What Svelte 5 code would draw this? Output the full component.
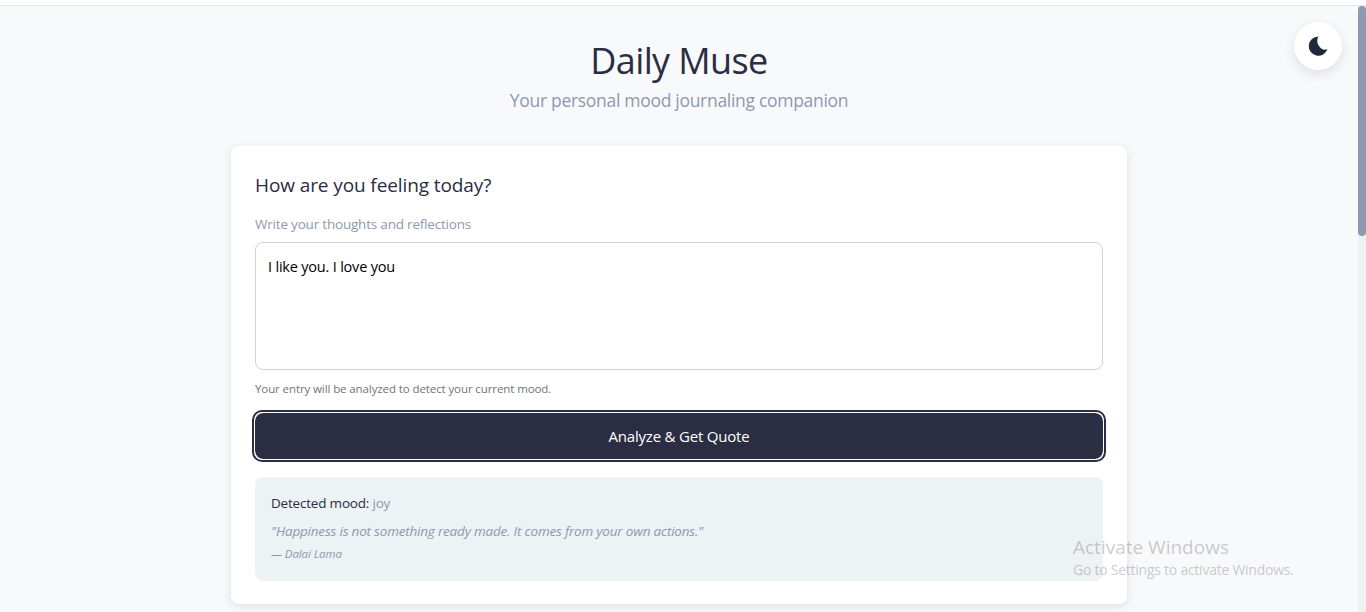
<script>
  let entry = $state("I like you. I love you");
</script>

<div class="topline"></div>
<div class="viewport">
  <main class="page">
    <header>
      <h1>Daily Muse</h1>
      <p class="tagline">Your personal mood journaling companion</p>
    </header>

    <section class="card">
      <h2>How are you feeling today?</h2>
      <label for="entry">Write your thoughts and reflections</label>
      <textarea id="entry" bind:value={entry}></textarea>
      <p class="hint">Your entry will be analyzed to detect your current mood.</p>
      <button class="analyze">Analyze &amp; Get Quote</button>

      <div class="result">
        <p class="mood">Detected mood: <span>joy</span></p>
        <p class="quote">"Happiness is not something ready made. It comes from your own actions."</p>
        <p class="author">— Dalai Lama</p>
      </div>
    </section>
  </main>

  <div class="scrollbar"><div class="thumb"></div></div>
</div>

<button class="theme" aria-label="Toggle dark mode">
  <svg viewBox="0 0 24 24" width="24" height="24">
    <path d="M12.3 2.5a9.6 9.6 0 1 0 9.2 12.6c-.9.4-2 .6-3.1.6a9.2 9.2 0 0 1-6.1-13.2z" fill="#1e293b" />
  </svg>
</button>

<div class="activate">
  <div class="big">Activate Windows</div>
  <div class="small">Go to Settings to activate Windows.</div>
</div>

<style>
  :global(body) {
    margin: 0;
    overflow: hidden;
    background: #f8f9fb;
    font-family: "Open Sans", "Noto Sans", sans-serif;
  }

  .topline {
    height: 5px;
    background: #fff;
    border-bottom: 1px solid #e2e4e8;
  }

  .viewport {
    display: flex;
    height: 606px;
    overflow: hidden;
  }

  .page {
    flex: 1;
    min-width: 0;
    display: flex;
    flex-direction: column;
    align-items: center;
  }

  header {
    text-align: center;
    height: 140px;
  }

  h1 {
    margin: 0;
    padding-top: 31px;
    font-size: 36px;
    line-height: 48px;
    font-weight: 400;
    letter-spacing: -0.6px;
    color: #2b2d42;
  }

  .tagline {
    margin: 0;
    padding-top: 3px;
    font-size: 17.5px;
    line-height: 24px;
    letter-spacing: -0.3px;
    color: #8d99ae;
  }

  .card {
    width: 896px;
    box-sizing: border-box;
    padding: 24px;
    height: 458px;
    background: #fff;
    border-radius: 8px;
    box-shadow: 0 2px 8px rgba(43, 45, 66, 0.12);
  }

  h2 {
    margin: 0;
    font-size: 19px;
    line-height: 30px;
    font-weight: 400;
    letter-spacing: -0.1px;
    color: #2b2d42;
  }

  label {
    display: block;
    margin-top: 14px;
    font-size: 13.5px;
    line-height: 20px;
    letter-spacing: -0.2px;
    color: #8d99ae;
  }

  textarea {
    display: block;
    box-sizing: border-box;
    width: 100%;
    height: 128px;
    margin-top: 8px;
    padding: 12px;
    border: 1px solid #ced2d9;
    border-radius: 8px;
    background: #fff;
    font: inherit;
    font-size: 14.5px;
    line-height: 24px;
    letter-spacing: -0.2px;
    color: #000;
    resize: none;
    outline: none;
  }

  .hint {
    margin: 10px 0 0;
    font-size: 11.5px;
    line-height: 18px;
    letter-spacing: -0.1px;
    color: #6c757d;
  }

  .analyze {
    display: block;
    width: 100%;
    height: 46px;
    margin-top: 15px;
    border: 0;
    border-radius: 8px;
    background: #2b2d42;
    color: #fff;
    font: inherit;
    font-size: 15px;
    letter-spacing: -0.2px;
    box-shadow: inset 0 0 0 0 transparent;
    outline: 2px solid #fff;
    outline-offset: 0;
    position: relative;
  }

  .analyze::after {
    content: "";
    position: absolute;
    inset: -3px;
    border: 2px solid #2b2d42;
    border-radius: 10px;
  }

  .result {
    margin-top: 18px;
    padding: 16px;
    height: 104px;
    box-sizing: border-box;
    background: #edf2f4;
    border-radius: 8px;
  }

  .result p {
    margin: 0;
  }

  .mood {
    font-size: 13.5px;
    line-height: 20px;
    letter-spacing: -0.2px;
    color: #2b2d42;
  }

  .mood span {
    color: #8d99ae;
  }

  .quote {
    padding-top: 8px;
    font-size: 13.5px;
    line-height: 20px;
    font-style: italic;
    letter-spacing: -0.2px;
    color: #8d99ae;
  }

  .author {
    padding-top: 4px;
    font-size: 11.5px;
    line-height: 18px;
    font-style: italic;
    letter-spacing: -0.1px;
    color: #8d99ae;
  }

  .scrollbar {
    width: 8px;
    background: #edf2f4;
  }

  .thumb {
    height: 230px;
    background: #8d99ae;
    border-radius: 4px;
  }

  .theme {
    position: absolute;
    top: 22px;
    left: 1294px;
    width: 48px;
    height: 48px;
    padding: 0;
    display: flex;
    align-items: center;
    justify-content: center;
    border: 0;
    border-radius: 50%;
    background: #fff;
    box-shadow: 0 4px 12px rgba(43, 45, 66, 0.12);
  }

  .activate {
    position: absolute;
    left: 1073px;
    top: 535px;
    color: rgba(110, 110, 110, 0.36);
    pointer-events: none;
  }

  .big {
    font-size: 19px;
    line-height: 25px;
  }

  .small {
    font-size: 14px;
    line-height: 20px;
    letter-spacing: -0.25px;
  }
</style>
